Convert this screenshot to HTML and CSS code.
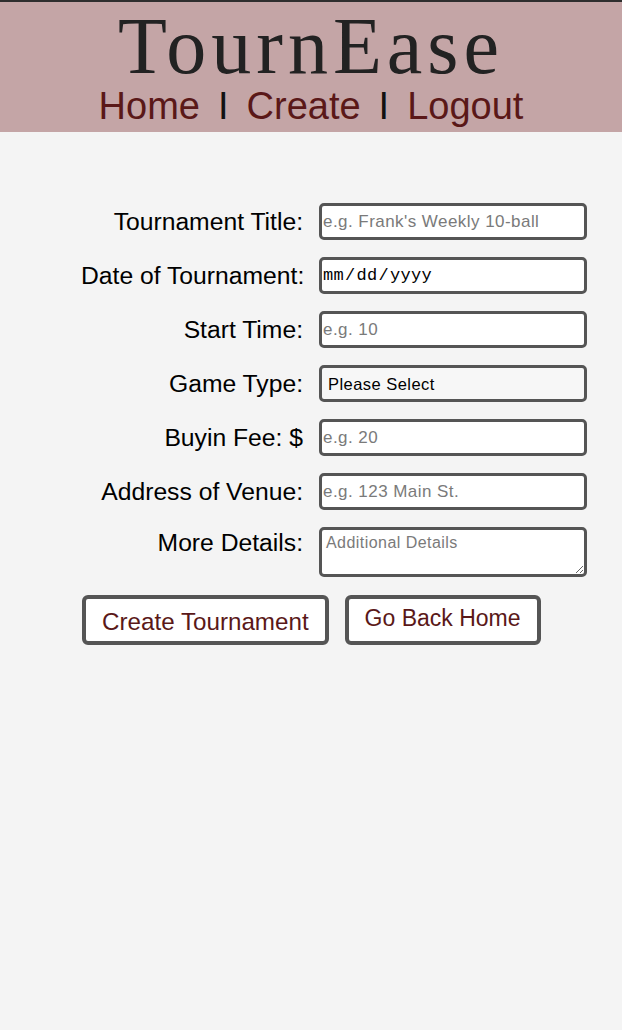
FILE: index.html
```html
<!DOCTYPE html>
<html>
<head>
<meta charset="utf-8">
<title>TournEase - Create</title>
<link rel="stylesheet" href="styles.css">
</head>
<body>
<header class="site-header">
  <h1 class="brand">TournEase</h1>
  <nav class="nav">
    <a href="#" class="nav-link">Home</a>
    <span class="sep">I</span>
    <a href="#" class="nav-link">Create</a>
    <span class="sep">I</span>
    <a href="#" class="nav-link">Logout</a>
  </nav>
</header>
<main class="page">
  <form class="tform">
    <label class="lbl" for="title">Tournament Title:</label>
    <input class="field" id="title" type="text" placeholder="e.g. Frank's Weekly 10-ball">

    <label class="lbl" for="date">Date of Tournament:</label>
    <input class="field field-date" id="date" type="date">

    <label class="lbl" for="time">Start Time:</label>
    <input class="field" id="time" type="text" placeholder="e.g. 10">

    <label class="lbl" for="game">Game Type:</label>
    <select class="field field-select" id="game">
      <option>Please Select</option>
      <option>8-ball</option>
      <option>9-ball</option>
      <option>10-ball</option>
    </select>

    <label class="lbl" for="fee">Buyin Fee: $</label>
    <input class="field" id="fee" type="text" placeholder="e.g. 20">

    <label class="lbl" for="venue">Address of Venue:</label>
    <input class="field" id="venue" type="text" placeholder="e.g. 123 Main St.">

    <label class="lbl lbl-top" for="details">More Details:</label>
    <textarea class="field field-area" id="details" placeholder="Additional Details"></textarea>

    <div class="actions">
      <button type="submit" class="btn btn-create">Create Tournament</button>
      <button type="button" class="btn btn-home">Go Back Home</button>
    </div>
  </form>
</main>
</body>
</html>
```

FILE: styles.css
```css
html, body {
  margin: 0;
  padding: 0;
}
body {
  background: #f4f4f4;
  font-family: "Liberation Sans", Arial, sans-serif;
  min-height: 1030px;
}
.site-header {
  background: #c4a5a6;
  border-top: 2px solid #2e2e2e;
  padding: 4px 0 8px;
  text-align: center;
}
.brand {
  margin: 0;
  font-family: "Liberation Serif", "Times New Roman", serif;
  font-weight: normal;
  font-size: 80px;
  line-height: 80px;
  letter-spacing: 5px;
  color: #222;
}
.nav {
  margin-top: 2px;
  display: flex;
  justify-content: center;
  align-items: baseline;
  font-size: 38px;
  line-height: 36px;
}
.nav-link {
  color: #5a1818;
  text-decoration: none;
}
.sep {
  color: #111;
  margin: 0 18px;
}
.page {
  padding: 71px 0 0 81px;
}
.tform {
  display: grid;
  grid-template-columns: 222px 268px;
  column-gap: 16px;
  row-gap: 17px;
  align-items: center;
}
.lbl {
  text-align: right;
  font-size: 24.7px;
  color: #000;
  white-space: nowrap;
}
.lbl-top {
  align-self: start;
  padding-top: 2px;
}
.field {
  box-sizing: border-box;
  height: 37px;
  width: 268px;
  margin: 0;
  border: 3px solid #555;
  border-radius: 5px;
  background: #fff;
  padding: 0 1px;
  font-family: "Liberation Sans", Arial, sans-serif;
  font-size: 17px;
  letter-spacing: 0.45px;
  color: #000;
  outline: none;
}
.field::placeholder {
  color: #7a7a7a;
}
.field-date {
  font-family: "Liberation Mono", "Courier New", monospace;
  font-size: 17px;
  letter-spacing: 0.3px;
  padding-left: 0;
}
.field-date::-webkit-calendar-picker-indicator {
  display: none;
}
.field-select {
  appearance: none;
  -webkit-appearance: none;
  background: #f7f7f7;
  padding-left: 6px;
  font-size: 16.5px;
}
.field-area {
  height: 50px;
  padding: 4px 4px;
  font-size: 16px;
  resize: vertical;
}
.actions {
  grid-column: 1 / 3;
  display: flex;
  gap: 16px;
  margin-top: 1px;
  margin-left: 1px;
  align-items: flex-start;
}
.btn {
  box-sizing: border-box;
  height: 50px;
  border: 4px solid #555;
  border-radius: 6px;
  background: #fff;
  color: #5a1818;
  font-family: "Liberation Sans", Arial, sans-serif;
  font-size: 23px;
  padding: 0 16px;
  margin: 0;
}
.btn-create {
  font-size: 24.2px;
  padding-top: 3px;
}
.btn-home {
  padding-bottom: 4px;
}
```
